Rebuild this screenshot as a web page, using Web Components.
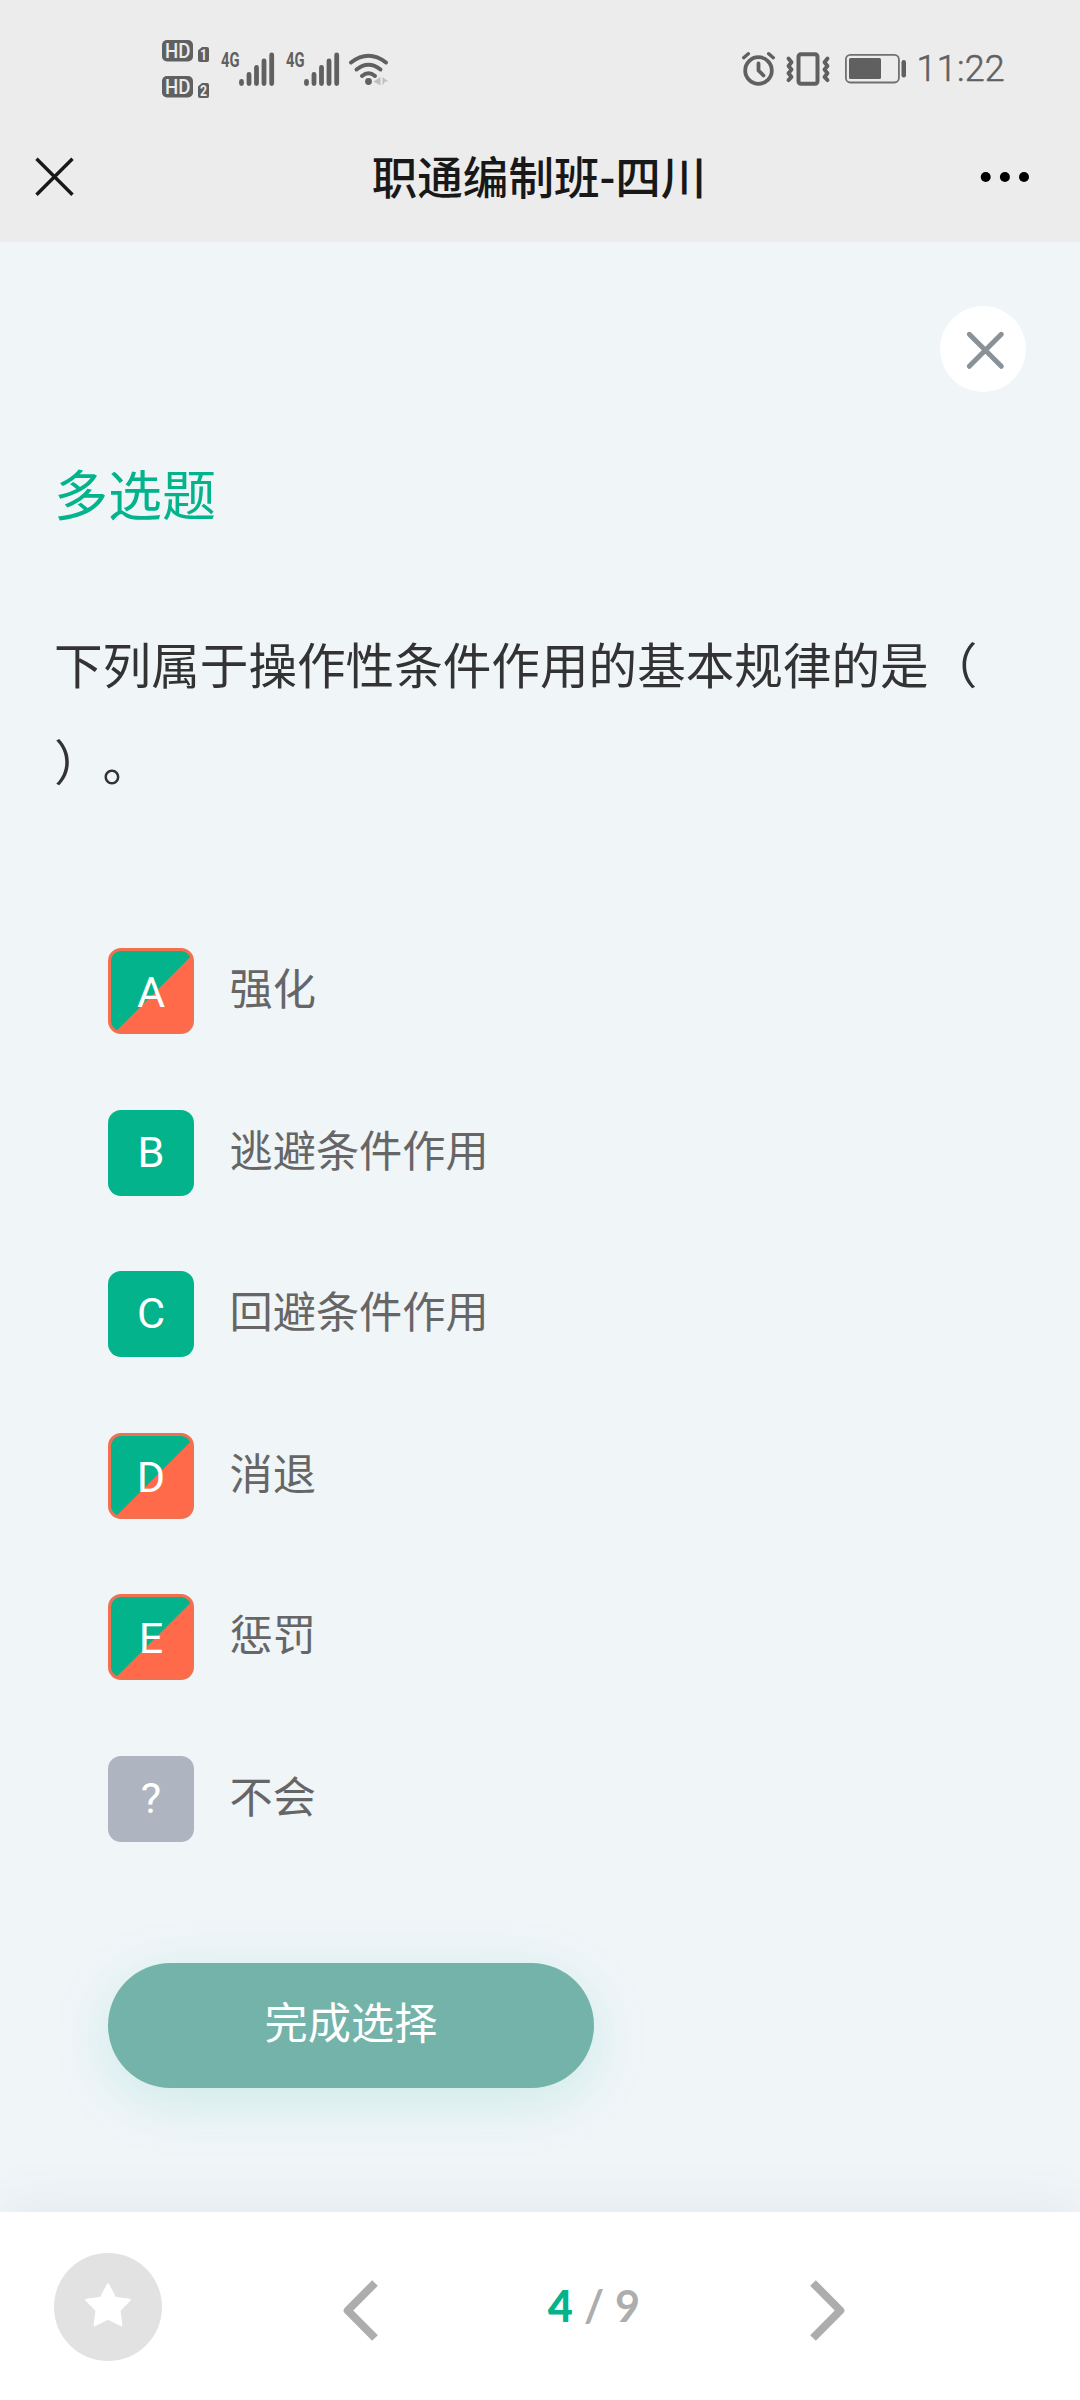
<!DOCTYPE html>
<html lang="zh-CN">
<head>
<meta charset="utf-8">
<title>职通编制班-四川</title>
<style>
  body {
    margin: 0;
    background-color: #f0f5f8;
    font-family: Roboto, "Noto Sans CJK SC", sans-serif;
  }
</style>
</head>
<body>
<quiz-page></quiz-page>

<script>
class StatusBar extends HTMLElement {
  constructor() {
    super();
    this.shadowDOM = this.attachShadow({ mode: "open" });
  }

  connectedCallback() {
    this.render();
  }

  renderSim(number) {
    return `
      <svg width="48" height="22" viewBox="0 0 48 22">
        <rect width="31" height="21.5" rx="5" fill="#606060"/>
        <text x="3" y="17.8" font-size="19.5" font-weight="500" fill="#ececec" textLength="25.5" lengthAdjust="spacingAndGlyphs">HD</text>
        <path d="M36 10.500l4-3.500h5a2 2 0 0 1 2 2V20a2 2 0 0 1-2 2h-7a2 2 0 0 1-2-2z" fill="#606060"/>
        <text x="38" y="19.700" font-size="14" font-weight="700" fill="#ececec" textLength="7" lengthAdjust="spacingAndGlyphs">${number}</text>
      </svg>
    `;
  }

  renderSignal() {
    return `
      <svg width="54" height="34" viewBox="0 0 54 34">
        <text x="0" y="15.2" font-size="20" font-weight="700" fill="#606060" textLength="18.5" lengthAdjust="spacingAndGlyphs">4G</text>
        <path d="M20.5 29.5v2M28 22.500v9M35.500 15.500v16M43 9v22.500M50.700 3v28.500" stroke="#606060" stroke-width="4.800" stroke-linecap="round"/>
      </svg>
    `;
  }

  render() {
    this.shadowDOM.innerHTML = `
      <style>
        :host {
          display: flex;
          align-items: center;
          box-sizing: border-box;
          height: 111px;
          padding: 26px 75px 0 162px;
          color: #606060;
        }

        svg {
          display: block;
          flex: none;
          overflow: visible;
        }

        .sims {
          display: flex;
          flex-direction: column;
          gap: 14px;
          margin-right: 11px;
        }

        .signals {
          display: flex;
          gap: 11px;
          margin-right: 9px;
        }

        .system {
          display: flex;
          align-items: center;
          margin-left: auto;
        }

        .time {
          font-size: 36px;
          font-weight: 300;
          line-height: 36px;
          margin-left: 10px;
          letter-spacing: 0.2px;
          -webkit-text-stroke: 0.5px #606060;
        }
      </style>
      <div class="sims">${this.renderSim(1)}${this.renderSim(2)}</div>
      <div class="signals">${this.renderSignal()}${this.renderSignal()}</div>
      <svg width="40" height="34" viewBox="0 0 40 34" fill="none" stroke="#606060" stroke-width="4" stroke-linecap="round">
        <path d="M2 10.500Q19.500-3 37 10.500"/>
        <path d="M7.500 17.500Q19.500 8 31.500 17.500"/>
        <path d="M13 24Q19.500 18.500 26 24"/>
        <circle cx="19.500" cy="29.500" r="3.400" fill="#606060" stroke="none"/>
        <path d="M31.500 25v8.500l-7-4zM33.500 25l6 4.500h-3.500l-2.500 4z" fill="#c0c0c0" stroke="none"/>
      </svg>
      <div class="system">
        <svg width="33" height="34" viewBox="0 0 33 34" fill="none" stroke="#606060" stroke-linecap="round" stroke-linejoin="round">
          <circle cx="16.500" cy="18.500" r="13.300" stroke-width="3.800"/>
          <path d="M16.500 11.500v7l5 5" stroke-width="3.800"/>
          <path d="M1.700 5.700l4.600-4M31.300 5.700l-4.600-4" stroke-width="3.400"/>
        </svg>
        <svg width="44" height="34" viewBox="0 0 44 34" fill="none" stroke="#606060" stroke-linecap="round" stroke-linejoin="round" style="margin-left: 12px">
          <rect x="11.500" y="2.300" width="19" height="29.500" rx="2.500" stroke-width="4"/>
          <path d="M1.500 6.500l3 3.700-3 3.700 3 3.700-3 3.700 3 3.700-3 3.200M40.500 6.500l-3 3.700 3 3.700-3 3.700 3 3.700-3 3.700 3 3.200" stroke-width="3.900"/>
        </svg>
        <svg width="62" height="30" viewBox="0 0 62 30" style="margin-left: 14px">
          <rect x="0.900" y="0.900" width="53" height="27.600" rx="4.500" fill="none" stroke="#707070" stroke-width="1.800"/>
          <rect x="4" y="4" width="32" height="21" rx="1.500" fill="#606060"/>
          <rect x="56.500" y="6" width="4.500" height="17.500" rx="2.200" fill="#606060"/>
        </svg>
        <span class="time">11:22</span>
      </div>
    `;
  }
}

class NavBar extends HTMLElement {
  constructor() {
    super();
    this.shadowDOM = this.attachShadow({ mode: "open" });
  }

  connectedCallback() {
    this.render();
  }

  render() {
    this.shadowDOM.innerHTML = `
      <style>
        :host {
          display: grid;
          grid-template-columns: 60px 1fr 50px;
          align-items: center;
          box-sizing: border-box;
          height: 131px;
          padding: 0 50px 0 34px;
        }

        svg {
          display: block;
        }

        h1 {
          margin: 7px 0 0 4px;
          font-size: 45.6px;
          font-weight: 500;
          line-height: 60px;
          text-align: center;
          color: #181818;
        }
      </style>
      <svg width="40" height="40" viewBox="0 0 40 40" fill="none" stroke="#181818" stroke-width="3.400">
        <path d="M2.500 1.700l36 36M38.500 1.700l-36 36"/>
      </svg>
      <h1><slot></slot></h1>
      <svg width="50" height="12" viewBox="0 0 50 12">
        <circle cx="5.700" cy="6" r="5"/>
        <circle cx="24.900" cy="6" r="5"/>
        <circle cx="44" cy="6" r="5"/>
      </svg>
    `;
  }
}

class CloseButton extends HTMLElement {
  constructor() {
    super();
    this.shadowDOM = this.attachShadow({ mode: "open" });
  }

  connectedCallback() {
    this.render();
  }

  render() {
    this.shadowDOM.innerHTML = `
      <style>
        :host {
          display: block;
          width: 86px;
          height: 86px;
          border-radius: 50%;
          background-color: #fff;
        }

        svg {
          display: block;
        }
      </style>
      <svg width="86" height="86" viewBox="0 0 86 86" fill="none" stroke="#8a9298" stroke-width="5" stroke-linecap="round">
        <path d="M29.300 28.300l32 32M61.300 28.300l-32 32"/>
      </svg>
    `;
  }
}

class QuizOption extends HTMLElement {
  constructor() {
    super();
    this.shadowDOM = this.attachShadow({ mode: "open" });
  }

  connectedCallback() {
    this.render();
  }

  render() {
    this.shadowDOM.innerHTML = `
      <style>
        :host {
          display: flex;
          align-items: center;
          height: 86px;
          font-size: 43.2px;
          color: #666;
        }

        .mark {
          display: flex;
          align-items: center;
          justify-content: center;
          box-sizing: border-box;
          width: 86px;
          height: 86px;
          margin-right: 35.5px;
          border-radius: 13px;
          background-color: #02b38c;
          color: #fff;
          line-height: 84px;
        }

        :host([state="missed"]) .mark {
          border: 3px solid #f27050;
          background: linear-gradient(135deg, #02b38c 53%, #ff6b4a 53.5%);
          padding-top: 4px;
        }

        :host([state="unknown"]) .mark {
          background-color: #aeb5c1;
        }

        .label {
          line-height: 64px;
        }
      </style>
      <span class="mark">${this.getAttribute("key")}</span>
      <span class="label"><slot></slot></span>
    `;
  }
}

class SubmitButton extends HTMLElement {
  constructor() {
    super();
    this.shadowDOM = this.attachShadow({ mode: "open" });
  }

  connectedCallback() {
    this.render();
  }

  render() {
    this.shadowDOM.innerHTML = `
      <style>
        :host {
          display: flex;
          align-items: center;
          justify-content: center;
          box-sizing: border-box;
          width: 486px;
          height: 125px;
          padding-bottom: 10px;
          border-radius: 62.5px;
          background-color: #74b3a9;
          box-shadow: 0 13px 60px rgba(2, 179, 140, 0.15);
          font-size: 43.2px;
          color: #fff;
        }
      </style>
      <slot></slot>
    `;
  }
}

class QuizFooter extends HTMLElement {
  constructor() {
    super();
    this.shadowDOM = this.attachShadow({ mode: "open" });
  }

  connectedCallback() {
    this.render();
  }

  render() {
    this.shadowDOM.innerHTML = `
      <style>
        :host {
          display: grid;
          grid-template-columns: 288px 90px 432px 36px;
          align-items: center;
          box-sizing: border-box;
          height: 188px;
          padding-top: 2px;
          background-color: #fff;
          box-shadow: 0 0 54px rgba(90, 110, 120, 0.1);
        }

        svg {
          display: block;
        }

        .star {
          margin-left: 54px;
        }

        .arrow {
          margin-top: 6px;
          justify-self: end;
        }

        .pager {
          display: flex;
          justify-content: center;
          gap: 11px;
          margin-bottom: 4px;
          font-family: Lato, sans-serif;
          font-size: 43.2px;
          font-weight: 700;
          line-height: 60px;
          color: #adadad;
        }

        .current {
          font-weight: 900;
          color: #02b38c;
        }
      </style>
      <svg class="star" width="108" height="108" viewBox="0 0 108 108">
        <circle cx="54" cy="54" r="54" fill="#e2e2e2"/>
        <path d="M54 31.500l6.900 13.400 14.600 2-10.300 10.600 2 14.500L54 65.500 40.800 72l2-14.500L32.500 46.900l14.600-2z" fill="#fff" stroke="#fff" stroke-width="2.500" stroke-linejoin="round"/>
      </svg>
      <svg class="arrow" width="36" height="61" viewBox="0 0 36 61" fill="none" stroke="#adadad" stroke-width="8">
        <path d="M33 3L5.700 30.500 33 58" stroke-linejoin="round"/>
      </svg>
      <div class="pager">
        <span class="current">${this.getAttribute("current")}</span>
        <span>/</span>
        <span>${this.getAttribute("total")}</span>
      </div>
      <svg class="arrow" width="36" height="61" viewBox="0 0 36 61" fill="none" stroke="#adadad" stroke-width="8">
        <path d="M3 3l27.300 27.500L3 58" stroke-linejoin="round"/>
      </svg>
    `;
  }
}

class QuizPage extends HTMLElement {
  constructor() {
    super();
    this.shadowDOM = this.attachShadow({ mode: "open" });
  }

  connectedCallback() {
    this.render();
  }

  render() {
    this.shadowDOM.innerHTML = `
      <style>
        :host {
          display: flex;
          flex-direction: column;
          height: 2400px;
          overflow: hidden;
        }

        header {
          background-color: #ececec;
        }

        main {
          flex: 1;
          display: flex;
          flex-direction: column;
          padding: 64px 54px 0;
        }

        close-button {
          align-self: flex-end;
        }

        h2 {
          margin: 66px 0 0;
          font-size: 54px;
          font-weight: 400;
          line-height: 80px;
          color: #02b38c;
        }

        /* keep full-width punctuation at a whole em */
        p {
          margin: 81px 0 0;
          font-size: 48.6px;
          line-height: 97.2px;
          white-space: nowrap;
          text-spacing-trim: space-all;
          color: #333;
        }

        .options {
          display: flex;
          flex-direction: column;
          gap: 75.600px;
          margin: 134.600px 0 0 54px;
        }

        submit-button {
          margin: 121px 0 0 54px;
        }
      </style>
      <header>
        <status-bar></status-bar>
        <nav-bar>职通编制班-四川</nav-bar>
      </header>
      <main>
        <close-button></close-button>
        <h2>多选题</h2>
        <p>下列属于操作性条件作用的基本规律的是（<br>）。</p>
        <div class="options">
          <quiz-option key="A" state="missed">强化</quiz-option>
          <quiz-option key="B">逃避条件作用</quiz-option>
          <quiz-option key="C">回避条件作用</quiz-option>
          <quiz-option key="D" state="missed">消退</quiz-option>
          <quiz-option key="E" state="missed">惩罚</quiz-option>
          <quiz-option key="?" state="unknown">不会</quiz-option>
        </div>
        <submit-button>完成选择</submit-button>
      </main>
      <quiz-footer current="4" total="9"></quiz-footer>
    `;
  }
}

customElements.define("status-bar", StatusBar);
customElements.define("nav-bar", NavBar);
customElements.define("close-button", CloseButton);
customElements.define("quiz-option", QuizOption);
customElements.define("submit-button", SubmitButton);
customElements.define("quiz-footer", QuizFooter);
customElements.define("quiz-page", QuizPage);
</script>
</body>
</html>
